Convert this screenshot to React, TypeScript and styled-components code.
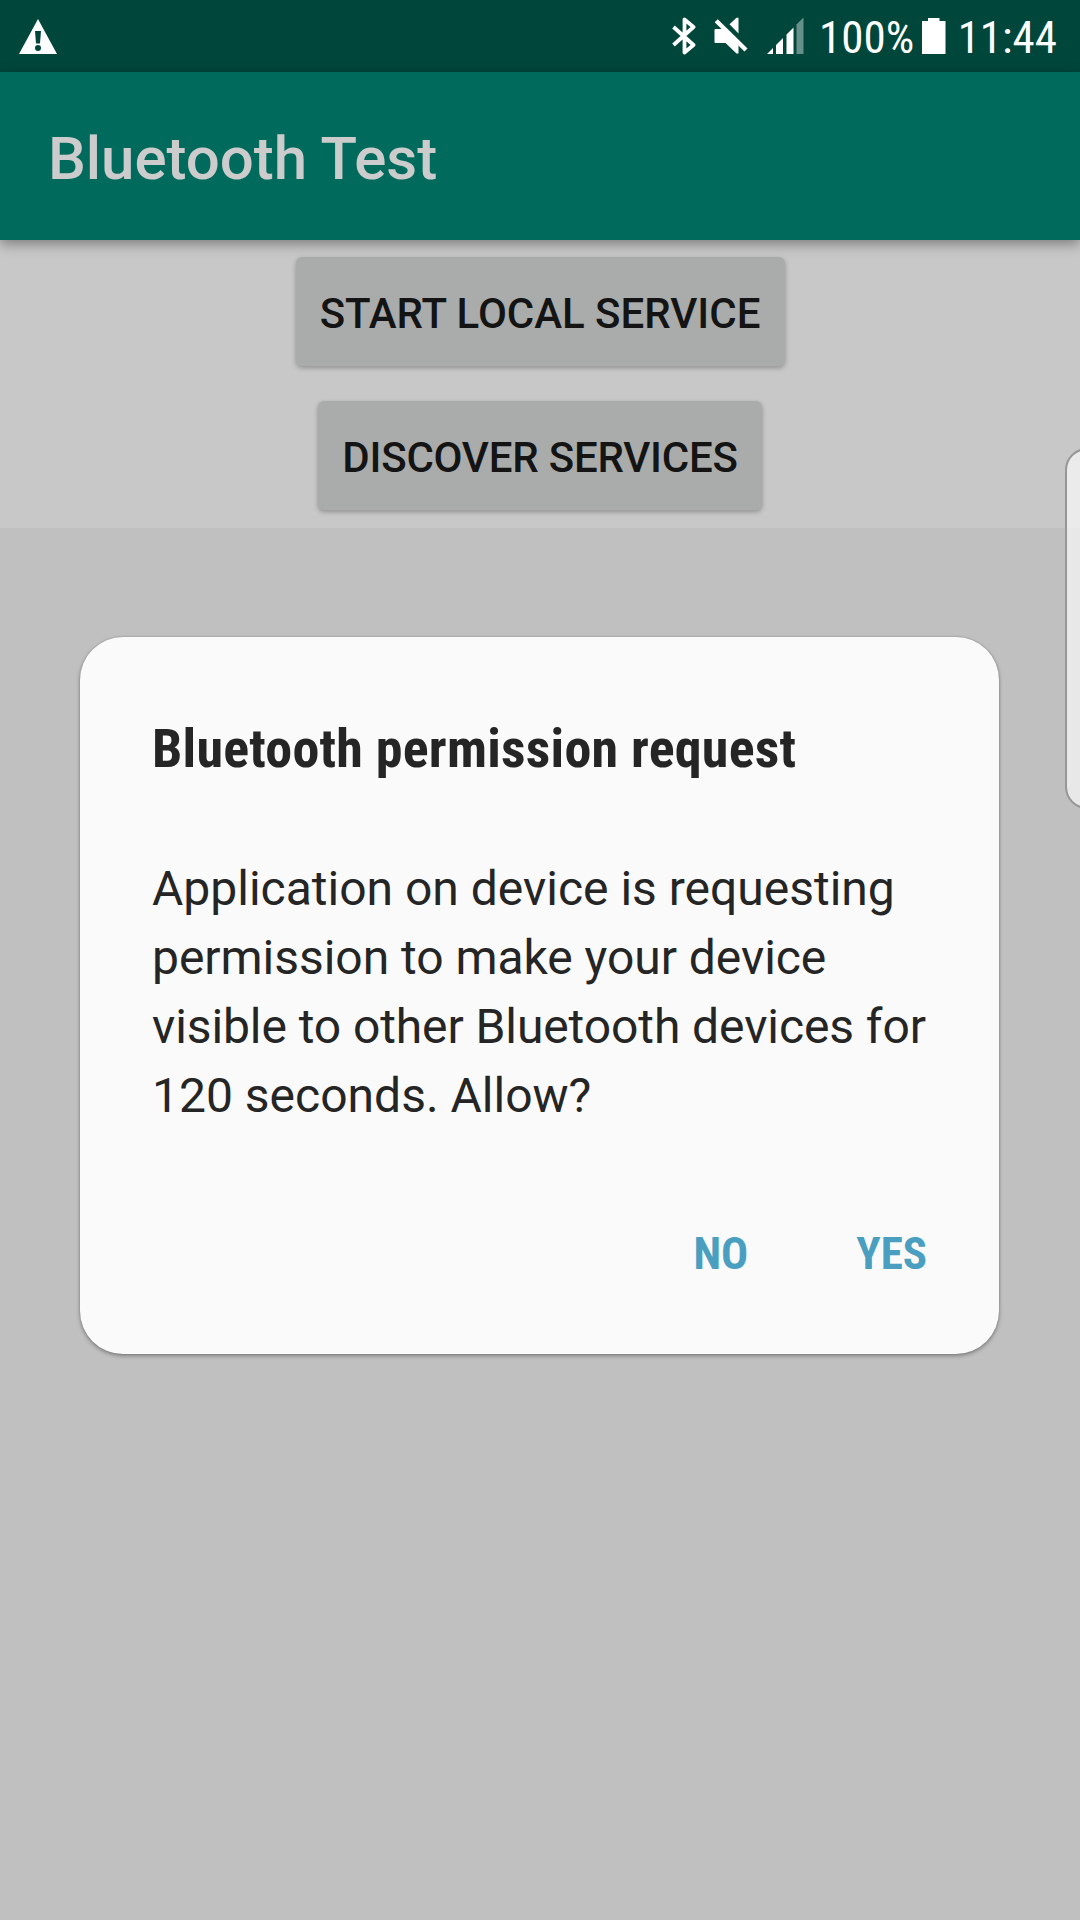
import React from "react";
import styled, { createGlobalStyle } from "styled-components";

const GlobalStyle = createGlobalStyle`
  * { box-sizing: border-box; }
  body {
    margin: 0;
    font-family: Roboto, "Liberation Sans", sans-serif;
    background: #c0c0c0;
  }
  button { font-family: inherit; border: 0; padding: 0; margin: 0; background: none; }
`;

const Screen = styled.div`
  position: relative;
  width: 1080px;
  height: 1920px;
  overflow: hidden;
  display: flex;
  flex-direction: column;
  background: #c0c0c0;
`;

const StatusBar = styled.header`
  height: 72px;
  flex: none;
  display: flex;
  justify-content: space-between;
  background: #00463b;
  color: #fff;
`;

const StatusGroup = styled.div<{ $side: "left" | "right" }>`
  display: flex;
  align-items: flex-start;
  padding-left: ${(p) => (p.$side === "left" ? 19 : 0)}px;
  padding-right: ${(p) => (p.$side === "right" ? 23 : 0)}px;
`;

const Glyph = styled.svg<{ $gap?: number }>`
  display: block;
  flex: none;
  margin-right: ${(p) => p.$gap ?? 0}px;
  margin-top: 17px;
`;

const StatusText = styled.span<{ $gap?: number }>`
  font-family: "Roboto Condensed", Roboto, sans-serif;
  font-stretch: 75%;
  font-size: 45px;
  line-height: 75px;
  white-space: nowrap;
  margin-right: ${(p) => p.$gap ?? 0}px;
`;

const AppBar = styled.div`
  height: 168px;
  flex: none;
  display: flex;
  align-items: center;
  padding: 5px 48px 0;
  background: #006b5d;
  box-shadow: 0 4px 12px rgba(0, 0, 0, 0.38);
  z-index: 1;
`;

const AppTitle = styled.h1`
  margin: 0;
  font-size: 60px;
  line-height: 70px;
  font-weight: 500;
  letter-spacing: -0.04px;
  color: #cccccc;
`;

const Actions = styled.main`
  height: 288px;
  flex: none;
  display: flex;
  flex-direction: column;
  align-items: center;
  gap: 35px;
  padding-top: 17px;
  background: #c8c8c8;
`;

const ActionButton = styled.button<{ $width: number; $tracking: number }>`
  width: ${(p) => p.$width}px;
  height: 109px;
  flex: none;
  padding-top: 4px;
  border-radius: 6px;
  background: #aaacab;
  box-shadow: 0 2px 5px rgba(0, 0, 0, 0.28);
  color: #141414;
  font-size: 42px;
  font-weight: 500;
  letter-spacing: ${(p) => p.$tracking}px;
  white-space: nowrap;
`;

const DialogLayer = styled.div`
  flex: 1;
  padding: 109px 81px 0 80px;
`;

const Dialog = styled.section`
  height: 717px;
  display: flex;
  flex-direction: column;
  padding: 80px 72px 0;
  border-radius: 43px;
  background: #fafafa;
  color: #252525;
  box-shadow: 0 2px 4px rgba(0, 0, 0, 0.32), 0 0 2px rgba(0, 0, 0, 0.22);
`;

const DialogTitle = styled.h2`
  margin: 0 0 73px;
  font-family: "Roboto Condensed", Roboto, sans-serif;
  font-stretch: 75%;
  font-size: 54px;
  line-height: 64px;
  font-weight: 700;
  letter-spacing: 0.24px;
  white-space: nowrap;
`;

const DialogBody = styled.p`
  margin: 0;
  font-size: 48px;
  line-height: 69px;
`;

const BodyLine = styled.span<{ $tracking?: number }>`
  display: block;
  white-space: nowrap;
  letter-spacing: ${(p) => p.$tracking ?? 0}px;
`;

const DialogActions = styled.div`
  display: flex;
  justify-content: flex-end;
  gap: 108px;
  margin-top: 96px;
`;

const DialogButton = styled.button`
  font-family: "Roboto Condensed", Roboto, sans-serif;
  font-stretch: 75%;
  font-size: 45px;
  line-height: 56px;
  font-weight: 700;
  color: #4a9fc0;
`;

const EdgeHandle = styled.div`
  position: absolute;
  top: 448px;
  right: -30px;
  width: 45px;
  height: 361px;
  border: 2px solid #979797;
  border-radius: 22px;
  background: rgba(255, 255, 255, 0.63);
  background-clip: padding-box;
`;

export default function App() {
  return (
    <Screen>
      <GlobalStyle />
      <StatusBar>
        <StatusGroup $side="left">
          <Glyph width="38" height="38" viewBox="0 0 38 38">
            <path d="M19 2 L38 37 H0 Z" fill="#fff" />
            <path d="M16 14 h6 l-1 12.500 h-4 Z" fill="#00463b" />
            <circle cx="19" cy="31" r="3" fill="#00463b" />
          </Glyph>
        </StatusGroup>
        <StatusGroup $side="right">
          <Glyph width="24" height="38" viewBox="0 0 24 38" $gap={18}>
            <path d="M1.500 10 L21.500 28 L12.500 35.500 V2.500 L21.500 10 L1.500 28" fill="none" stroke="#fff" strokeWidth="3.800" strokeLinejoin="round" />
          </Glyph>
          <Glyph width="34" height="38" viewBox="0 0 34 38" $gap={19}>
            <path d="M1.500 12 H10 L24.500 26 V36.500 H22.500 L11.500 26 H1.500 Q0.500 26 0.500 25 V13 Q0.500 12 1.500 12 Z" fill="#fff" />
            <path d="M24.500 0.800 V16.500 L15.500 7.200 L22.500 0.800 Z" fill="#fff" />
            <path d="M2.200 3.700 L32 33" stroke="#fff" strokeWidth="4.400" />
          </Glyph>
          <Glyph width="37" height="38" viewBox="0 0 37 38" $gap={15}>
            <path d="M0 37 L6 31 V37 Z M9 28 L16 21 V37 H9 Z M19.500 17.500 L26.500 10.500 V37 H19.500 Z" fill="#fff" />
            <path d="M29.500 7.500 L36.500 0.500 V37 H29.500 Z" fill="#669089" />
          </Glyph>
          <StatusText $gap={7.5}>100%</StatusText>
          <Glyph width="24" height="38" viewBox="0 0 24 38" $gap={12}>
            <path d="M0 4 H6 V1 H17.500 V4 H23.500 V37 H0 Z" fill="#fff" />
          </Glyph>
          <StatusText>11:44</StatusText>
        </StatusGroup>
      </StatusBar>
      <AppBar>
        <AppTitle>Bluetooth Test</AppTitle>
      </AppBar>
      <Actions>
        <ActionButton $width={489} $tracking={-0.02}>START LOCAL SERVICE</ActionButton>
        <ActionButton $width={444} $tracking={-0.22}>DISCOVER SERVICES</ActionButton>
      </Actions>
      <DialogLayer>
        <Dialog role="dialog">
          <DialogTitle>Bluetooth permission request</DialogTitle>
          <DialogBody>
            <BodyLine>Application on device is requesting</BodyLine>
            <BodyLine $tracking={-0.04}>permission to make your device</BodyLine>
            <BodyLine $tracking={-0.09}>visible to other Bluetooth devices for</BodyLine>
            <BodyLine>120 seconds. Allow?</BodyLine>
          </DialogBody>
          <DialogActions>
            <DialogButton>NO</DialogButton>
            <DialogButton>YES</DialogButton>
          </DialogActions>
        </Dialog>
      </DialogLayer>
      <EdgeHandle />
    </Screen>
  );
}
